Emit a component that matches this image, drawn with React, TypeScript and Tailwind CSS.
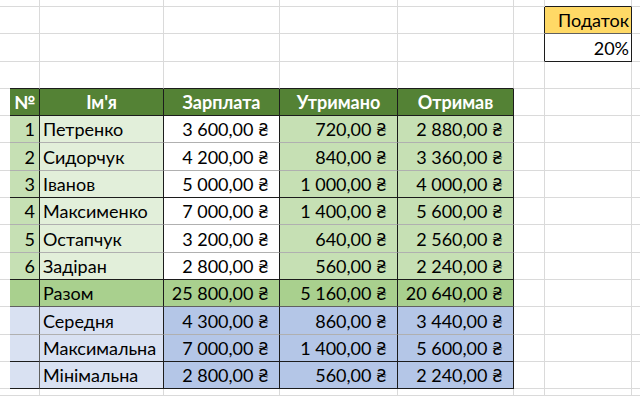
type Tone = 'g' | 'l' | 'm' | 'k'

const RIGHT: Record<Tone, string> = {
  g: 'border-r-[#dadada]',
  l: 'border-r-[#b0b0b0]',
  m: 'border-r-[#606060]',
  k: 'border-r-[#1c1c1c]',
}

const BOTTOM: Record<Tone, string> = {
  g: 'border-b-[#dadada]',
  l: 'border-b-[#b0b0b0]',
  m: 'border-b-[#606060]',
  k: 'border-b-[#1c1c1c]',
}

type CellSpec = {
  text?: string
  bg: string
  r: Tone
  b: Tone
  align: 'left' | 'right' | 'center'
  head?: boolean
}

const ALIGN = {
  left: 'justify-start pl-[3px]',
  right: 'justify-end pr-[10px]',
  center: 'justify-center',
}

const people = [
  ['1', 'Петренко', '3 600,00 ₴', '720,00 ₴', '2 880,00 ₴'],
  ['2', 'Сидорчук', '4 200,00 ₴', '840,00 ₴', '3 360,00 ₴'],
  ['3', 'Іванов', '5 000,00 ₴', '1 000,00 ₴', '4 000,00 ₴'],
  ['4', 'Максименко', '7 000,00 ₴', '1 400,00 ₴', '5 600,00 ₴'],
  ['5', 'Остапчук', '3 200,00 ₴', '640,00 ₴', '2 560,00 ₴'],
  ['6', 'Задіран', '2 800,00 ₴', '560,00 ₴', '2 240,00 ₴'],
]

const stats = [
  ['Середня', '4 300,00 ₴', '860,00 ₴', '3 440,00 ₴'],
  ['Максимальна', '7 000,00 ₴', '1 400,00 ₴', '5 600,00 ₴'],
  ['Мінімальна', '2 800,00 ₴', '560,00 ₴', '2 240,00 ₴'],
]

const COLS = 9
const ROWS = 16

// builds the whole sheet as a grid of cells, gridlines by default
function buildSheet(): CellSpec[][] {
  const sheet: CellSpec[][] = []
  for (let r = 0; r < ROWS; r++) {
    const row: CellSpec[] = []
    for (let c = 0; c < COLS; c++) {
      row.push({ bg: 'bg-white', r: 'g', b: 'g', align: 'right' })
    }
    sheet.push(row)
  }

  // tax box
  sheet[0][7].b = 'k'
  sheet[1][6].r = 'k'
  sheet[2][6].r = 'k'
  sheet[1][7] = { text: 'Податок', bg: 'bg-[#ffd966]', r: 'k', b: 'm', align: 'right' }
  sheet[2][7] = { text: '20%', bg: 'bg-white', r: 'k', b: 'k', align: 'right' }

  // top edge of table
  for (let c = 1; c <= 5; c++) sheet[3][c].b = 'k'
  for (let r = 4; r <= 14; r++) sheet[r][0].r = 'k'

  const heads = ['№', "Ім'я", 'Зарплата', 'Утримано', 'Отримав']
  heads.forEach((h, i) => {
    sheet[4][i + 1] = { text: h, bg: 'bg-[#548235]', r: 'k', b: 'k', align: 'center', head: true }
  })

  const bodyBg = ['bg-[#c6e0b4]', 'bg-[#e2efda]', 'bg-white', 'bg-[#c6e0b4]', 'bg-[#c6e0b4]']
  people.forEach((p, i) => {
    const b: Tone = i === 2 || i === 5 ? 'k' : 'l'
    p.forEach((v, j) => {
      sheet[5 + i][j + 1] = { text: v, bg: bodyBg[j], r: 'k', b, align: j === 1 ? 'left' : 'right' }
    })
  })

  const total = ['', 'Разом', '25 800,00 ₴', '5 160,00 ₴', '20 640,00 ₴']
  total.forEach((v, j) => {
    sheet[11][j + 1] = { text: v, bg: 'bg-[#a9d08e]', r: 'k', b: 'm', align: j === 1 ? 'left' : 'right' }
  })

  stats.forEach((s, i) => {
    const b: Tone = i === 0 ? 'l' : 'k'
    const vals = ['', ...s]
    vals.forEach((v, j) => {
      sheet[12 + i][j + 1] = {
        text: v,
        bg: j < 2 ? 'bg-[#d9e1f2]' : 'bg-[#b4c6e7]',
        r: j === 0 ? 'm' : 'k',
        b,
        align: j === 1 ? 'left' : 'right',
      }
    })
  })

  return sheet
}

function Cell({ spec, col }: { spec: CellSpec; col: number }) {
  const pad =
    spec.align === 'right' && (col === 1 || col === 7)
      ? col === 1
        ? 'justify-end pr-[4px]'
        : 'justify-end pr-[2px]'
      : ALIGN[spec.align]
  return (
    <div
      className={`flex items-end overflow-hidden whitespace-nowrap border-r border-b pb-[3px] ${RIGHT[spec.r]} ${BOTTOM[spec.b]} ${spec.bg} ${pad} ${
        spec.head ? 'font-bold text-white' : 'text-black'
      }`}
    >
      {spec.text}
    </div>
  )
}

export default function App() {
  const sheet = buildSheet()
  return (
    <div className="h-[396px] w-[640px] overflow-hidden bg-white font-['Lato','Noto_Sans',sans-serif] text-[18px] leading-[20px]">
      <div className="grid h-full grid-cols-[10px_30px_124px_116px_118px_116px_31px_87px_1fr] grid-rows-[7px_27px_28px_27px_27px_27px_28px_27px_27px_28px_27px_27px_28px_27px_27px_1fr]">
        {sheet.map((row, r) =>
          row.map((spec, c) => <Cell key={`${r}-${c}`} spec={spec} col={c} />)
        )}
      </div>
    </div>
  )
}
